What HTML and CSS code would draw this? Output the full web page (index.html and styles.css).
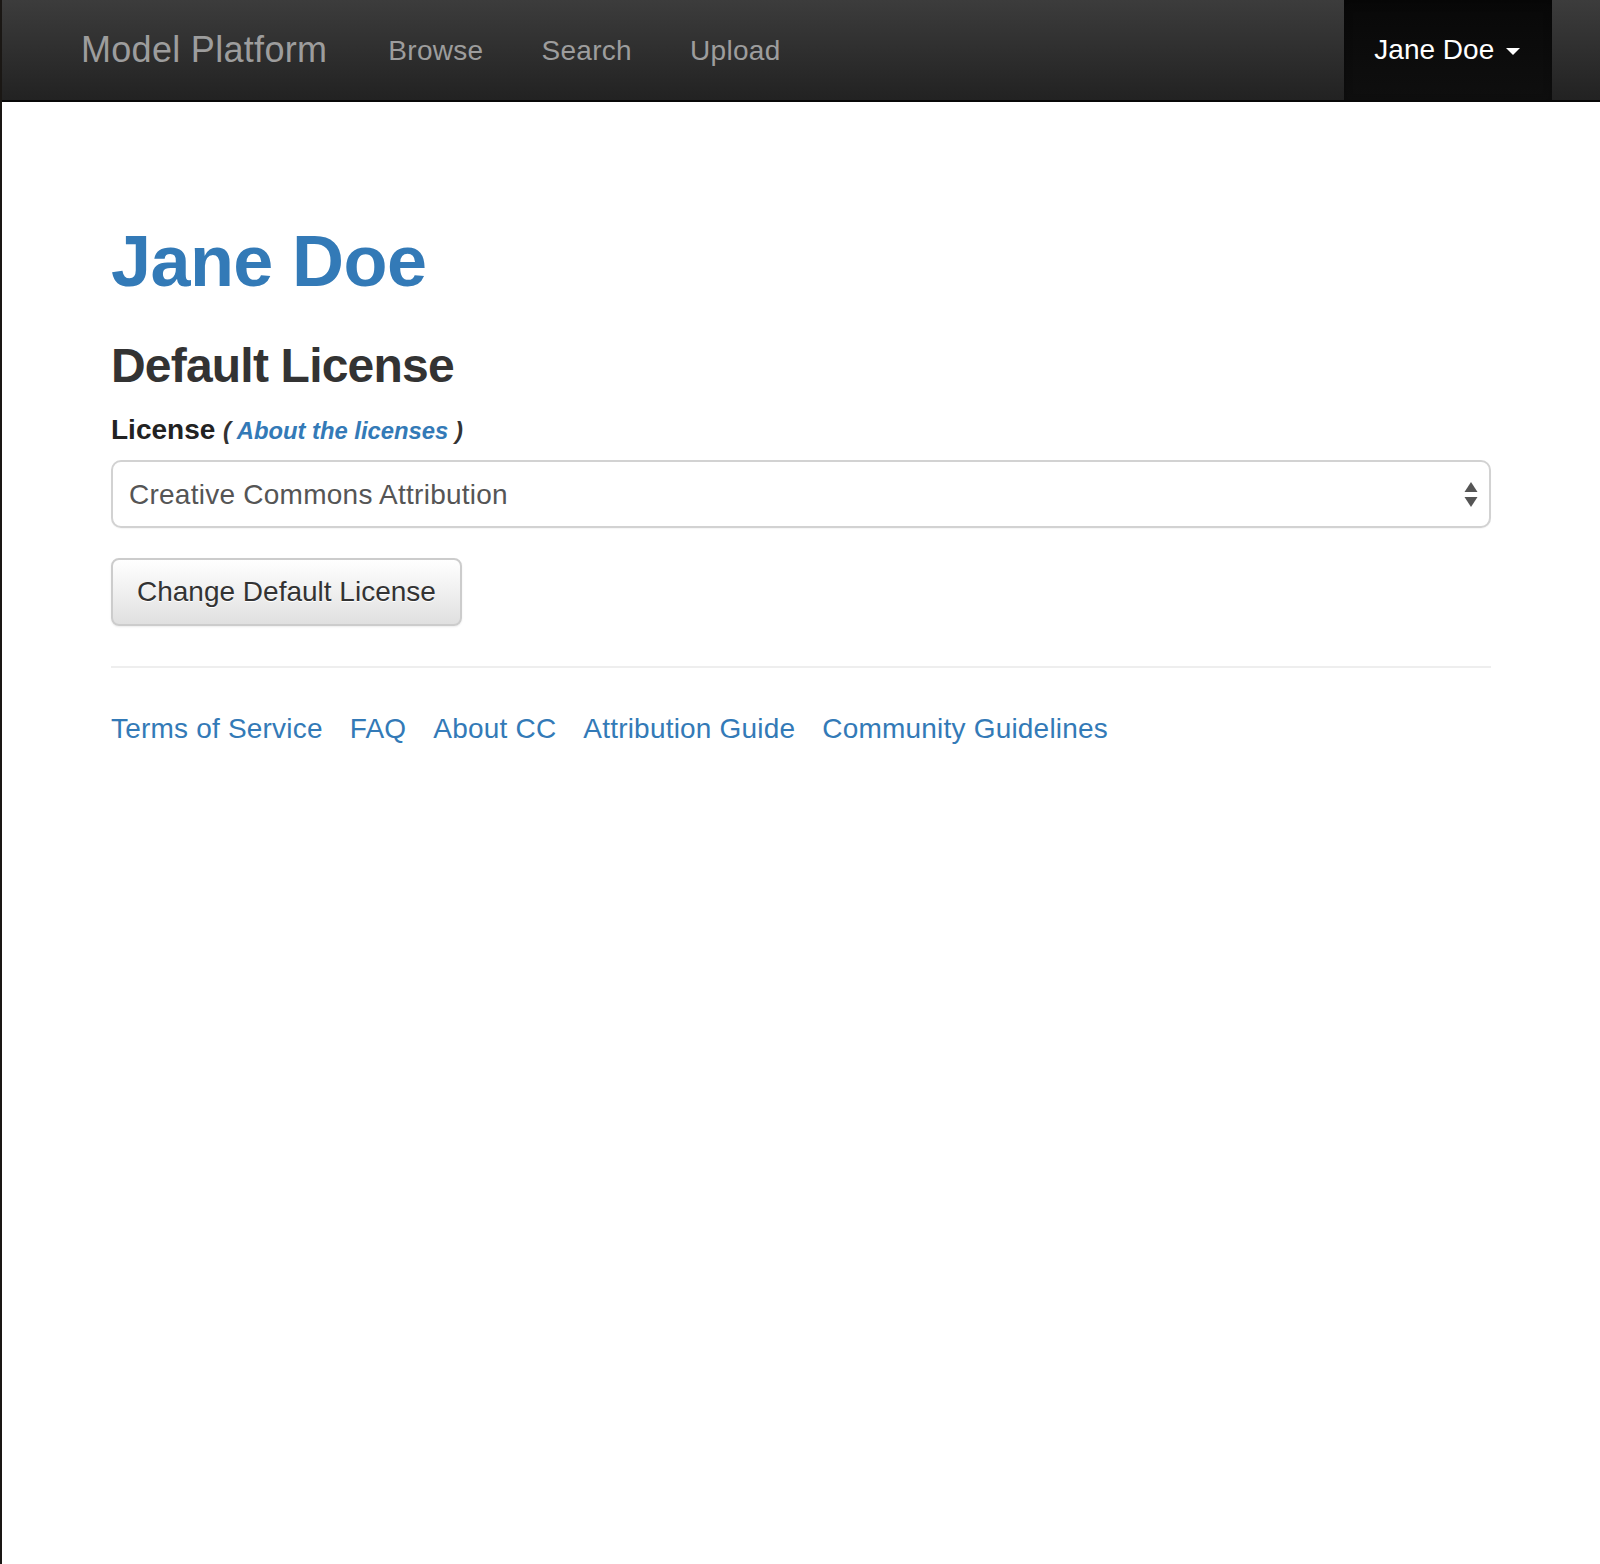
FILE: index.html
```html
<!DOCTYPE html>
<html lang="en">
<head>
<meta charset="utf-8">
<title>Jane Doe - Model Platform</title>
<link rel="stylesheet" href="styles.css">
</head>
<body>
<div class="page">
  <nav class="navbar">
    <a class="brand" href="#">Model Platform</a>
    <ul class="nav-links">
      <li><a href="#">Browse</a></li>
      <li><a href="#">Search</a></li>
      <li><a href="#">Upload</a></li>
    </ul>
    <div class="user-menu">
      <a href="#">Jane Doe <span class="caret"></span></a>
    </div>
  </nav>

  <main class="container">
    <h1 class="page-title"><a href="#">Jane Doe</a></h1>
    <h3 class="section-title">Default License</h3>
    <form class="license-form">
      <div class="form-group">
        <label class="field-label" for="license">License <small>( <a href="#">About the licenses</a> )</small></label>
        <div class="select-wrap">
          <select id="license" class="form-control">
            <option>Creative Commons Attribution</option>
          </select>
          <svg class="select-arrows" width="14" height="26" viewBox="0 0 14 26" aria-hidden="true">
            <path d="M7 0 L13.5 10 L0.5 10 Z" fill="#555"/>
            <path d="M0.5 15 L13.5 15 L7 25 Z" fill="#555"/>
          </svg>
        </div>
      </div>
      <button type="button" class="btn">Change Default License</button>
    </form>
    <hr class="divider">
    <ul class="footer-links">
      <li><a href="#">Terms of Service</a></li>
      <li><a href="#">FAQ</a></li>
      <li><a href="#">About CC</a></li>
      <li><a href="#">Attribution Guide</a></li>
      <li><a href="#">Community Guidelines</a></li>
    </ul>
  </main>
</div>
</body>
</html>
```

FILE: styles.css
```css
html, body {
  margin: 0;
  padding: 0;
  background: #fff;
}

body {
  font-family: "Liberation Sans", Arial, Helvetica, sans-serif;
  font-size: 28px;
  line-height: 40px;
  color: #333;
}

a {
  color: #337ab7;
  text-decoration: none;
}

.page {
  border-left: 2px solid #1a1714;
  min-height: 1564px;
  box-sizing: border-box;
}

/* Navbar */
.navbar {
  display: flex;
  align-items: stretch;
  height: 100px;
  padding-left: 49px;
  background: linear-gradient(to bottom, #3c3c3c 0%, #222 100%);
  border-bottom: 2px solid #080808;
}

.brand {
  display: block;
  padding: 30px 30px 0;
  font-size: 36px;
  line-height: 40px;
  letter-spacing: 0.3px;
  color: #9d9d9d;
}

.nav-links {
  display: flex;
  list-style: none;
  margin: 0;
  padding: 0 0 0 2px;
}

.nav-links a {
  display: block;
  padding: 31px 29px 0;
  line-height: 40px;
  letter-spacing: 0.3px;
  color: #9d9d9d;
}

.user-menu {
  margin-left: auto;
  margin-right: 48px;
  background: linear-gradient(to bottom, #080808 0%, #0f0f0f 100%);
  box-shadow: inset 0 3px 9px rgba(0, 0, 0, 0.25);
}

.user-menu a {
  display: block;
  padding: 30px 32px 0 30px;
  line-height: 40px;
  color: #fff;
}

.caret {
  display: inline-block;
  width: 0;
  height: 0;
  margin-left: 4px;
  vertical-align: middle;
  border-top: 7px solid #fff;
  border-left: 7px solid transparent;
  border-right: 7px solid transparent;
}

/* Content */
.container {
  width: 1380px;
  margin: 0 auto;
  padding-top: 120px;
}

.page-title {
  margin: 0 0 39px;
  font-size: 72px;
  line-height: 1.1;
  font-weight: 700;
  letter-spacing: -0.6px;
}

.section-title {
  margin: 0;
  font-size: 48px;
  line-height: 1.1;
  font-weight: 700;
  letter-spacing: -0.8px;
  color: #333;
}

.license-form {
  margin: 0;
}

.form-group {
  margin-top: 17px;
  margin-bottom: 30px;
}

.field-label {
  display: block;
  margin-bottom: 9px;
  font-weight: 700;
  color: #222;
}

.field-label small {
  font-size: 85%;
  font-style: italic;
  color: #333;
}

.select-wrap {
  position: relative;
}

.form-control {
  display: block;
  width: 100%;
  height: 68px;
  box-sizing: border-box;
  padding: 13px 16px;
  font-family: inherit;
  font-size: 28px;
  line-height: 40px;
  letter-spacing: 0.25px;
  color: #555;
  background: #fff;
  border: 2px solid #d2d2d2;
  border-radius: 10px;
  -webkit-appearance: none;
  appearance: none;
  box-shadow: 0 1px 1px rgba(0, 0, 0, 0.04);
}

.select-arrows {
  position: absolute;
  right: 13px;
  top: 22px;
  pointer-events: none;
}

.btn {
  display: inline-block;
  height: 68px;
  padding: 12px 24px;
  box-sizing: border-box;
  font-family: inherit;
  font-size: 28px;
  line-height: 40px;
  color: #333;
  text-shadow: 0 1px 0 #fff;
  background: linear-gradient(to bottom, #fff 0%, #e0e0e0 100%);
  border: 2px solid #ccc;
  border-radius: 8px;
  box-shadow: inset 0 1px 0 rgba(255, 255, 255, 0.15), 0 1px 2px rgba(0, 0, 0, 0.08);
  cursor: pointer;
}

.divider {
  margin: 40px 0 41px;
  border: 0;
  border-top: 2px solid #eee;
}

.footer-links {
  display: flex;
  gap: 27px;
  list-style: none;
  margin: 0;
  padding: 0;
  letter-spacing: 0.2px;
}
```
